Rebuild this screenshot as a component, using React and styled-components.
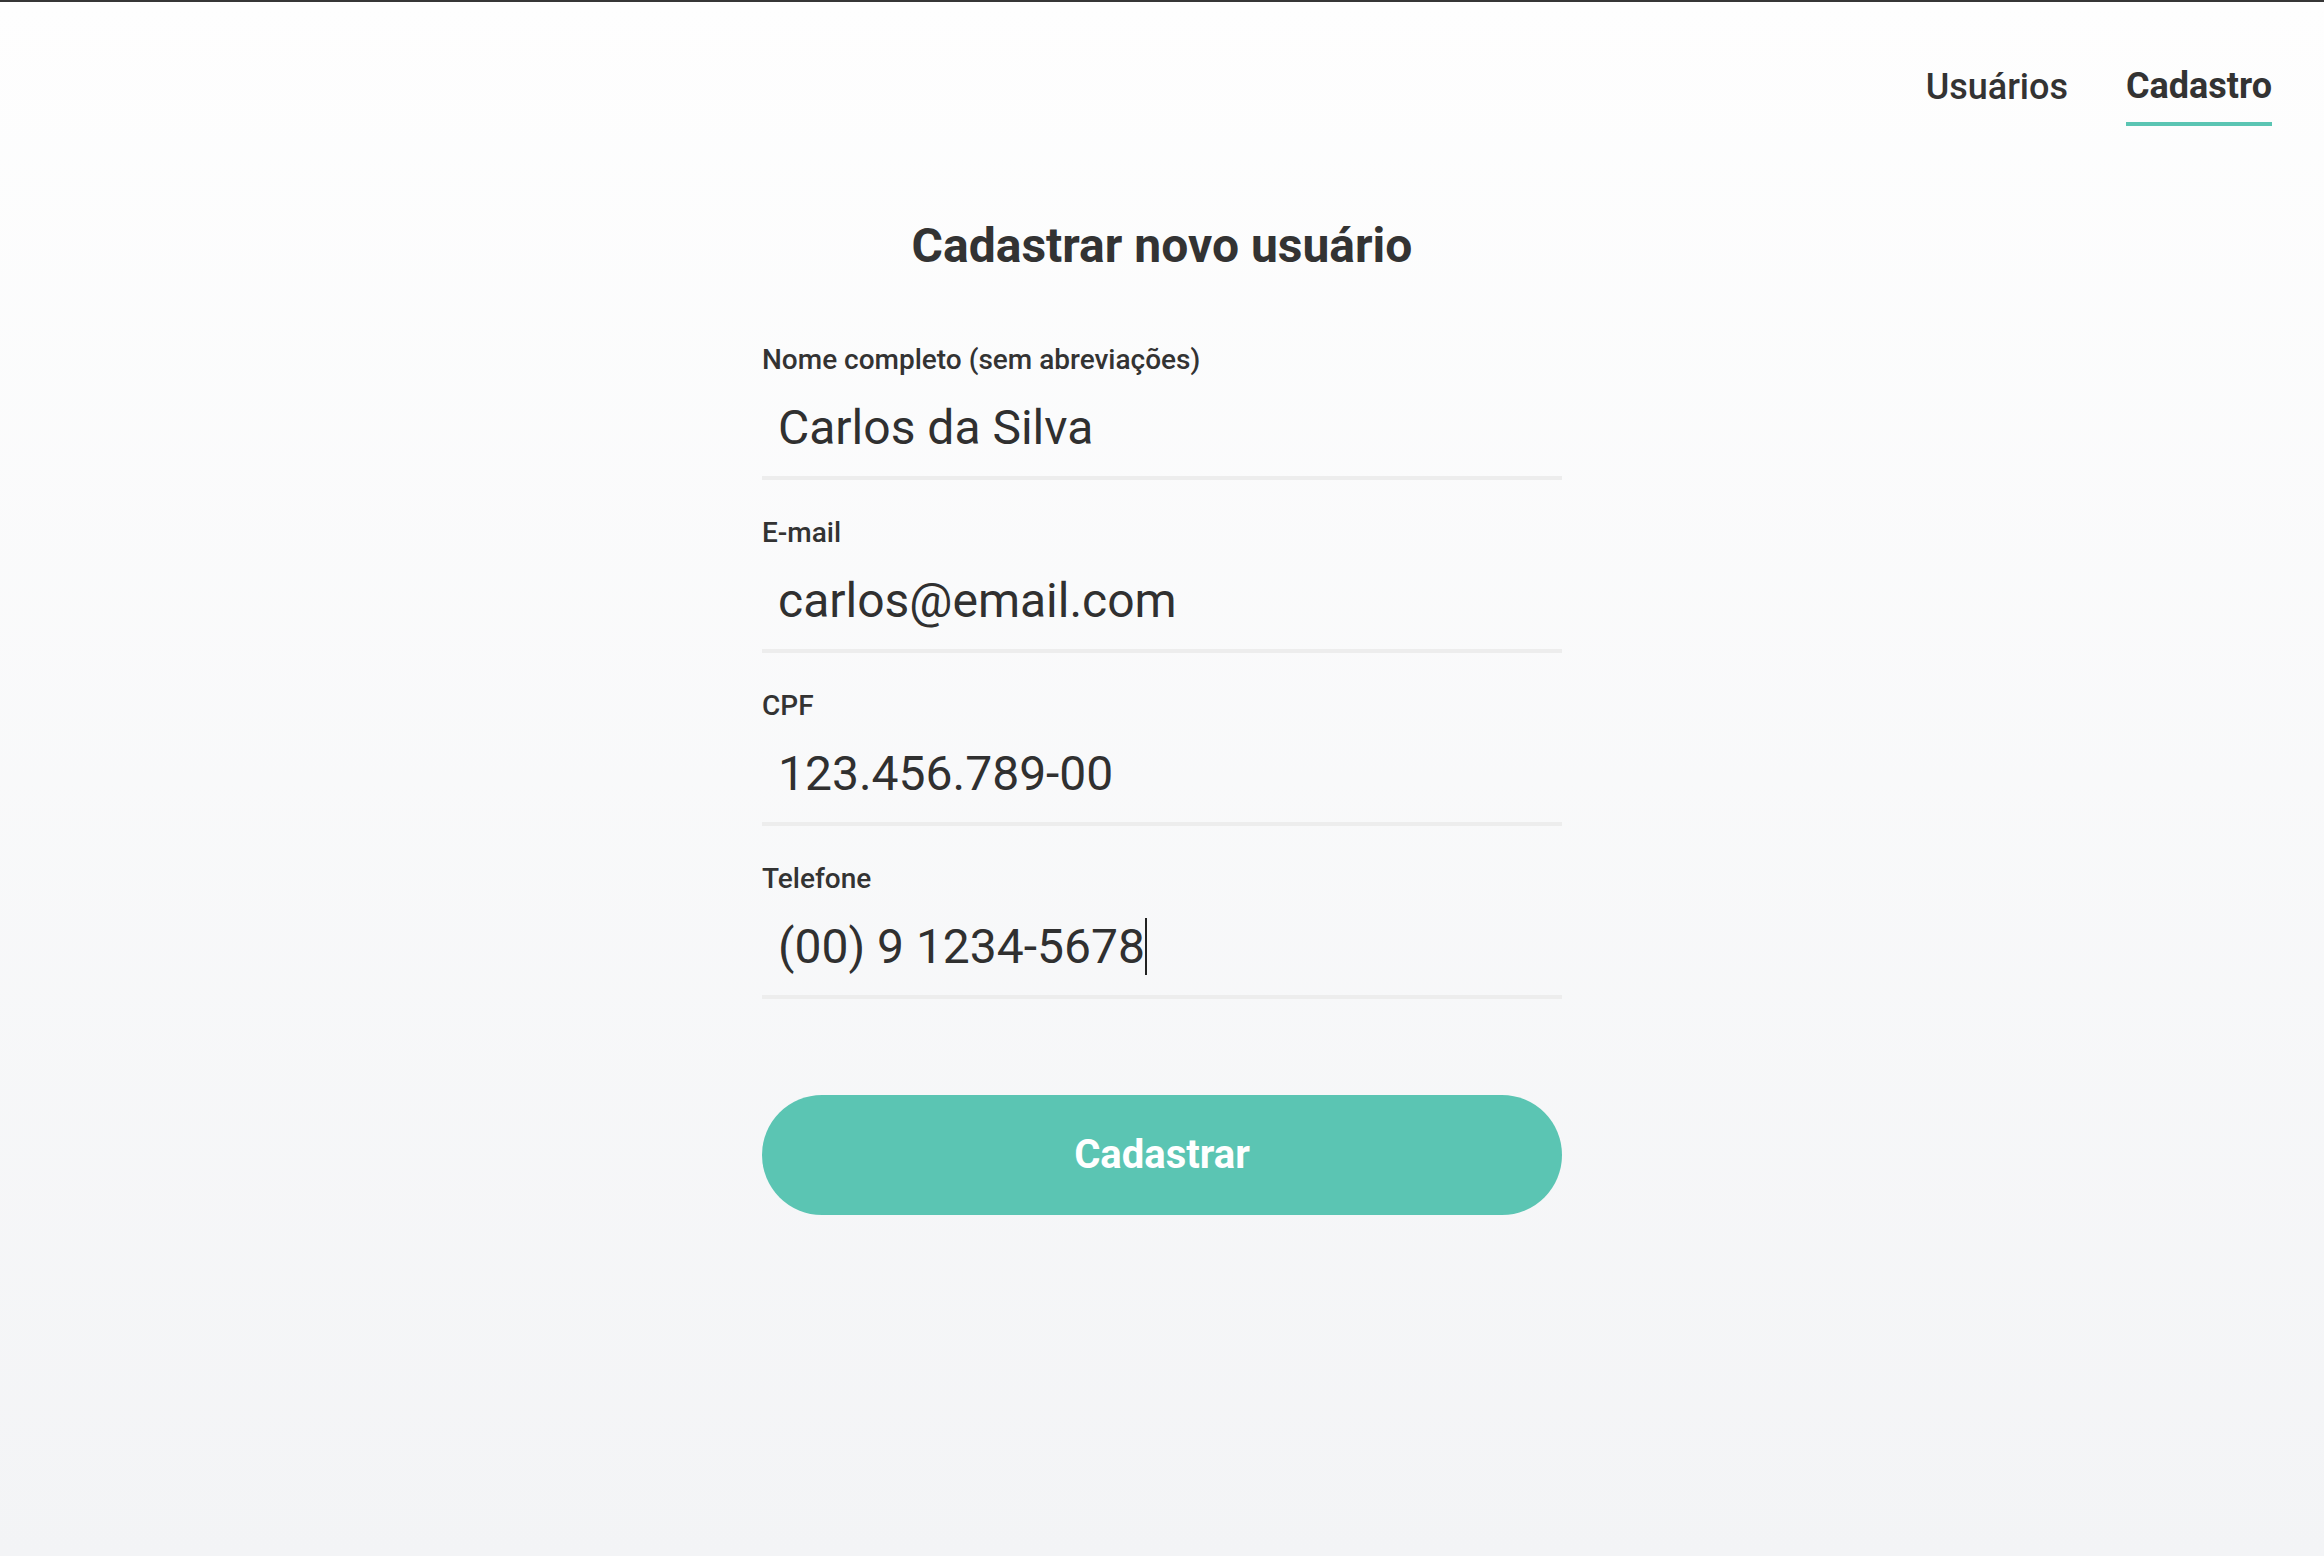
import React from "react";
import styled, { createGlobalStyle } from "styled-components";

const GlobalStyle = createGlobalStyle`
  html, body {
    margin: 0;
    padding: 0;
  }

  body {
    font-family: Roboto, "Liberation Sans", sans-serif;
    color: #333333;
  }
`;

const Page = styled.div`
  min-height: 100vh;
  box-sizing: border-box;
  border-top: 2px solid #363636;
  background: linear-gradient(180deg, #fefefe 0%, #f3f4f6 100%);
`;

const Header = styled.header`
  display: flex;
  justify-content: flex-end;
  align-items: flex-start;
  gap: 58px;
  padding: 66px 52px 0;
`;

const NavLink = styled.a`
  font-size: 36px;
  line-height: 36px;
  font-weight: ${(props) => (props.active ? 700 : 500)};
  color: #333333;
  text-decoration: none;
  padding-top: ${(props) => (props.active ? 0 : 1)}px;
  padding-bottom: 18px;
  border-bottom: 4px solid ${(props) => (props.active ? "#5bc5b3" : "transparent")};
  cursor: pointer;
`;

const Main = styled.main`
  width: 800px;
  margin: 0 auto;
  padding-top: 95px;
`;

const Title = styled.h1`
  margin: 0 0 76px;
  font-size: 48px;
  line-height: 48px;
  font-weight: 700;
  text-align: center;
  color: #333333;
`;

const Form = styled.form`
  display: flex;
  flex-direction: column;
  gap: 39px;
`;

const Field = styled.div`
  display: flex;
  flex-direction: column;
  gap: 30px;
`;

const Label = styled.label`
  font-size: 28px;
  line-height: 28px;
  font-weight: 500;
  color: #333333;
`;

const Value = styled.div`
  padding: 0 16px 24px;
  border-bottom: 4px solid #ededed;
  font-size: 48px;
  line-height: 48px;
  font-weight: 400;
  color: #303030;
  white-space: nowrap;
`;

const Text = styled.span`
  border-right: 2px solid ${(props) => (props.focused ? "#222222" : "transparent")};
`;

const SubmitButton = styled.button`
  display: flex;
  align-items: center;
  justify-content: center;
  margin-top: 57px;
  height: 120px;
  width: 100%;
  border: none;
  border-radius: 60px;
  background-color: #5bc5b3;
  color: #ffffff;
  font-family: Roboto, "Liberation Sans", sans-serif;
  font-size: 40px;
  line-height: 40px;
  font-weight: 700;
  cursor: pointer;
`;

const fields = [
  { id: "nome", label: "Nome completo (sem abreviações)", value: "Carlos da Silva" },
  { id: "email", label: "E-mail", value: "carlos@email.com" },
  { id: "cpf", label: "CPF", value: "123.456.789-00" },
  { id: "telefone", label: "Telefone", value: "(00) 9 1234-5678", focused: true },
];

export default function App() {
  return (
    <Page>
      <GlobalStyle />
      <Header>
        <NavLink>Usuários</NavLink>
        <NavLink active>Cadastro</NavLink>
      </Header>

      <Main>
        <Title>Cadastrar novo usuário</Title>
        <Form onSubmit={(e) => e.preventDefault()}>
          {fields.map((f) => (
            <Field key={f.id}>
              <Label htmlFor={f.id}>{f.label}</Label>
              <Value id={f.id}>
                <Text focused={f.focused}>{f.value}</Text>
              </Value>
            </Field>
          ))}
          <SubmitButton type="submit">Cadastrar</SubmitButton>
        </Form>
      </Main>
    </Page>
  );
}
